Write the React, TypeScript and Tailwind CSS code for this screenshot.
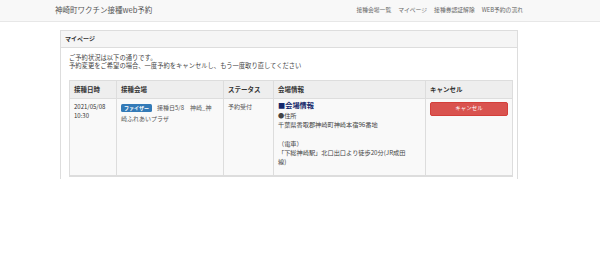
export default function App() {
  return (
    <div className="h-[280px] w-[600px] overflow-hidden bg-white text-[#333] [font-family:'Noto_Sans_CJK_JP','Noto_Sans',sans-serif]">
      <nav className="h-[22px] border-b border-[#e7e7e7] bg-[#f8f8f8]">
        <div className="ml-[55px] flex h-full w-[468px] items-center justify-between pb-px">
          <span className="text-[7.5px] leading-none text-[#555]">神崎町ワクチン接種web予約</span>
          <ul className="flex gap-[7px] text-[5.8px] leading-none text-[#666]">
            <li>接種会場一覧</li>
            <li>マイページ</li>
            <li>接種券認証解除</li>
            <li>WEB予約の流れ</li>
          </ul>
        </div>
      </nav>

      <div className="ml-[60px] mt-[8px] w-[458px] border border-b-0 border-[#ddd]">
        <div className="flex h-[17px] items-center border-b border-[#ddd] bg-[#f5f5f5] px-[4px] text-[6px] font-bold leading-none">
          マイページ
        </div>
        <div className="pl-[8px] pr-[6px] pt-[6px] pb-[2px]">
          <p className="text-[6.3px] leading-[8px] text-[#444]">
            ご予約状況は以下の通りです。
            <br />
            予約変更をご希望の場合、一度予約をキャンセルし、もう一度取り直してください
          </p>
          <table className="mt-[10px] w-[443px] table-fixed border-collapse text-[6px] leading-[9px]">
            <colgroup>
              <col className="w-[47px]" />
              <col className="w-[107px]" />
              <col className="w-[50px]" />
              <col className="w-[152px]" />
              <col className="w-[87px]" />
            </colgroup>
            <thead>
              <tr className="h-[18px] bg-[#eee] text-left text-[6.5px] font-bold">
                <th className="border border-[#ddd] px-[4px]">接種日時</th>
                <th className="border border-[#ddd] px-[4px]">接種会場</th>
                <th className="border border-[#ddd] px-[4px]">ステータス</th>
                <th className="border border-[#ddd] px-[4px]">会場情報</th>
                <th className="border border-[#ddd] px-[4px]">キャンセル</th>
              </tr>
            </thead>
            <tbody>
              <tr className="h-[77px] bg-[#f9f9f9] align-top">
                <td className="border border-b-2 border-[#ddd] px-[4px] pt-[3px]">
                  2021/05/08
                  <br />
                  10:30
                </td>
                <td className="border border-b-2 border-[#ddd] px-[4px] pt-[4px] text-[#555]">
                  <div className="flex items-center">
                    <span className="mr-[5px] rounded-[1.5px] bg-[#337ab7] px-[3px] text-[5px] font-bold leading-[8px] text-white">
                      ファイザー
                    </span>
                    <span>接種日5/8　神崎_神</span>
                  </div>
                  <div className="mt-[2px]">崎ふれあいプラザ</div>
                </td>
                <td className="border border-b-2 border-[#ddd] px-[4px] pt-[3px] text-[#555]">予約受付</td>
                <td className="border border-b-2 border-[#ddd] px-[4px] pt-[1px] text-[#444]">
                  <div className="text-[7.2px] font-bold leading-[11px] text-[#14276b]">■会場情報</div>
                  <div className="text-[6.2px] leading-[9.3px]">
                    ●住所
                    <br />
                    千葉県香取郡神崎町神崎本宿96番地
                    <br />
                    <br />
                    （電車）
                    <br />
                    「下総神崎駅」北口出口より徒歩20分(JR成田
                    <br />
                    線)
                  </div>
                </td>
                <td className="border border-b-2 border-[#ddd] px-[4px] pt-[3px]">
                  <div className="flex h-[14px] w-[78px] items-center justify-center rounded-[2px] border border-[#d43f3a] bg-[#d9534f] text-[5.5px] leading-none text-white">
                    キャンセル
                  </div>
                </td>
              </tr>
            </tbody>
          </table>
        </div>
      </div>
    </div>
  );
}
